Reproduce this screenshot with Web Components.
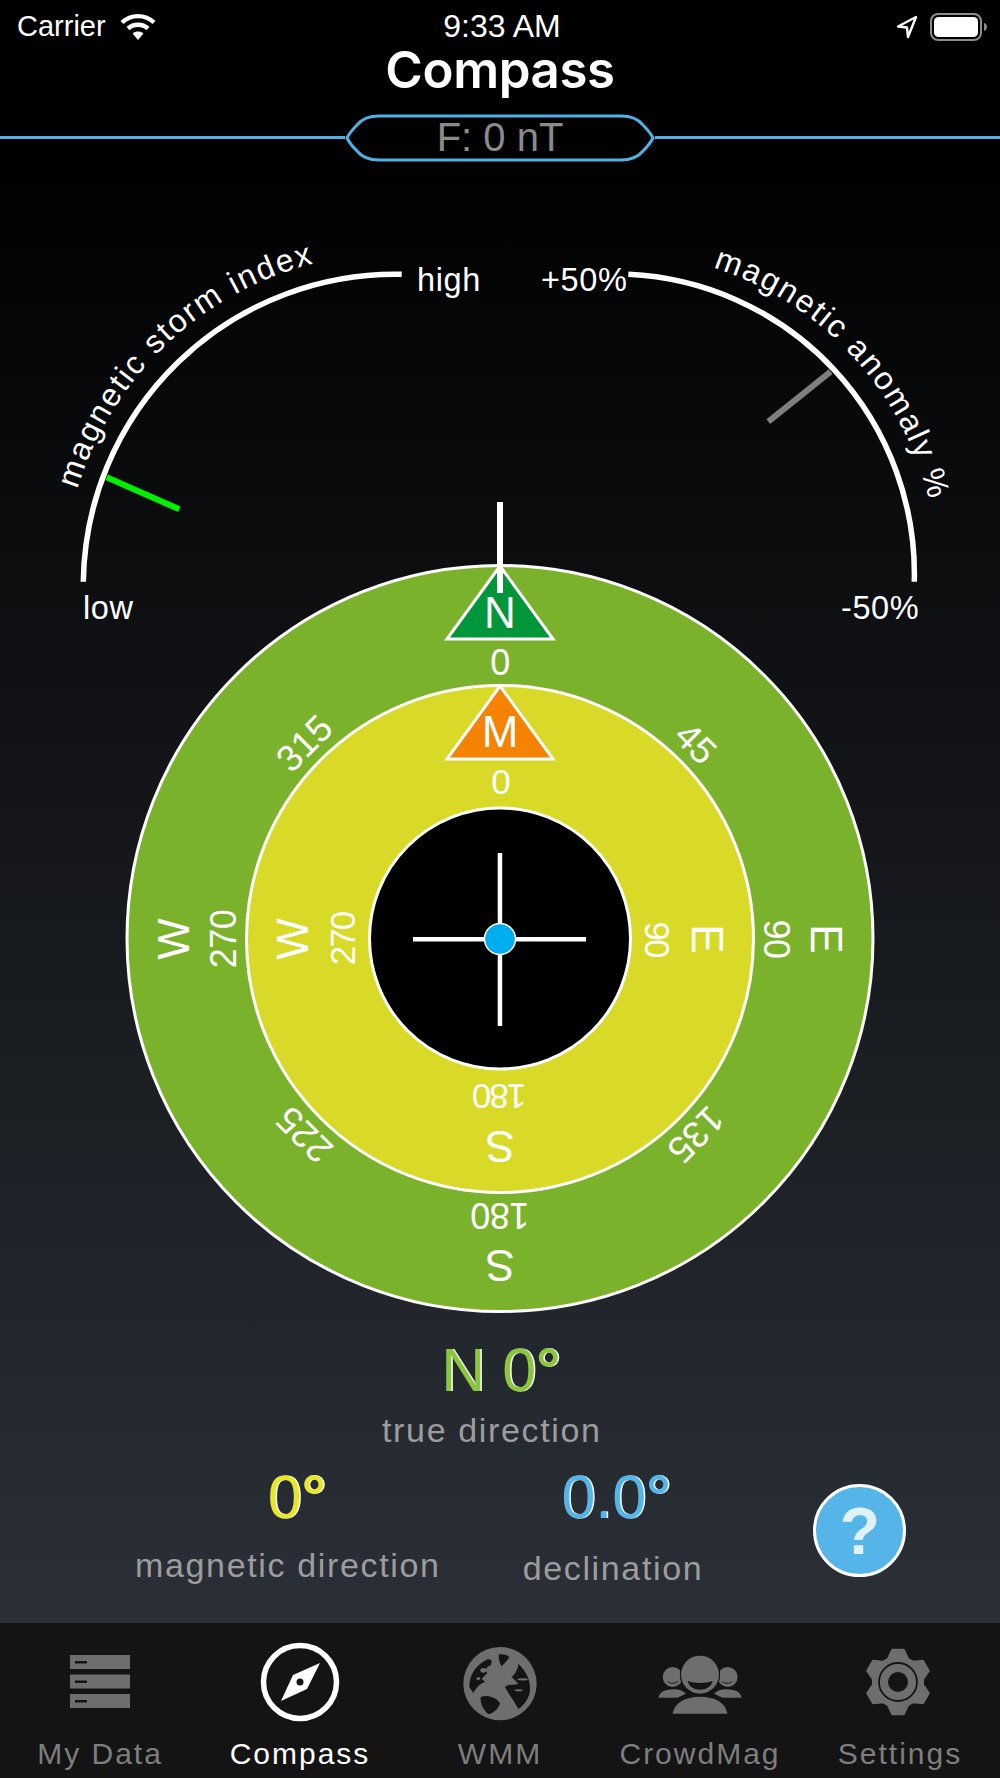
<!DOCTYPE html>
<html lang="en">
<head>
<meta charset="utf-8">
<title>Compass</title>
<style>
html,body{margin:0;padding:0}
body{width:1000px;height:1778px;overflow:hidden;background:linear-gradient(180deg,#000 8%,#2b3038 91.3%);font-family:"Liberation Sans",Arial,sans-serif;color:#fff}
</style>
</head>
<body>
<app-shell>
  <status-bar></status-bar>
  <app-title>Compass</app-title>
  <field-bar>F: 0 nT</field-bar>
  <compass-dial></compass-dial>
  <read-outs></read-outs>
  <tab-bar></tab-bar>
</app-shell>
<script>
function shadow(el,html){el.attachShadow({mode:'open'}).innerHTML=html;}

customElements.define('app-shell',class extends HTMLElement{
  connectedCallback(){shadow(this,`<style>:host{display:flex;flex-direction:column;width:1000px;height:1778px}</style><slot></slot>`);}
});

customElements.define('status-bar',class extends HTMLElement{
  connectedCallback(){shadow(this,`<style>
  :host{display:grid;grid-template-columns:1fr auto 1fr;align-items:center;height:46px;box-sizing:border-box;padding:7px 13px 0 17px;font-size:29px;color:#fff}
  .l{display:flex;align-items:center;gap:14px}
  .r{display:flex;align-items:center;justify-content:flex-end;gap:12px}
  svg{display:block}
  .t{font-size:32px}
  </style>
  <div class="l"><span>Carrier</span>
   <svg width="36" height="28" viewBox="0 0 36 28"><g fill="none" stroke="#fff" stroke-width="4.4"><path d="M2 9.5C11 1 25 1 34 9.5"/><path d="M8 15.5C13.5 10.5 22.5 10.5 28 15.5"/></g><path d="M12.6 20.4C15.5 17.8 20.500 17.800 23.400 20.400L18 27Z" fill="#fff"/></svg></div>
  <div class="t">9:33 AM</div>
  <div class="r">
   <svg width="22" height="24" viewBox="0 0 22 24"><path d="M20 2L2 11.500L11 12.500L12 22Z" fill="none" stroke="#fff" stroke-width="2.400" stroke-linejoin="round"/></svg>
   <svg width="57" height="28" viewBox="0 0 57 28"><rect x="1" y="1" width="50" height="26" rx="7" fill="none" stroke="#8c8c8c" stroke-width="2"/><rect x="4" y="4" width="44" height="20" rx="4.500" fill="#fff"/><path d="M54 10c2 .6 3 2.200 3 4s-1 3.400-3 4z" fill="#8c8c8c"/></svg>
  </div>`);}
});

customElements.define('app-title',class extends HTMLElement{
  connectedCallback(){shadow(this,`<style>:host{display:block;height:61px;text-align:center;font-size:51px;line-height:48px;font-weight:600;color:#fff;letter-spacing:-.4px;font-family:Inter,"Liberation Sans",sans-serif}</style><slot></slot>`);}
});

customElements.define('field-bar',class extends HTMLElement{
  connectedCallback(){shadow(this,`<style>
  :host{display:flex;align-items:center;height:63px;font-size:40px;color:#8b8b8b}
  .line{flex:1;height:3px;background:#4fb1e4;position:relative;top:-1px}
  .pill{position:relative;width:310px;height:50px;display:flex;align-items:center;justify-content:center;top:-1px}
  .pill svg{position:absolute;left:0;top:0}
  .pill span{position:relative}
  </style>
  <div class="line"></div>
  <div class="pill"><svg width="310" height="50" viewBox="0 0 310 50"><path d="M34 3H276C288 3 294 7 298 12C303 17 306 21 308 25C306 29 303 33 298 38C294 43 288 47 276 47H34C22 47 16 43 12 38C7 33 4 29 2 25C4 21 7 17 12 12C16 7 22 3 34 3Z" fill="none" stroke="#4fb1e4" stroke-width="3"/></svg><span><slot></slot></span></div>
  <div class="line"></div>`);}
});

customElements.define('compass-dial',class extends HTMLElement{
  connectedCallback(){
    const rot=(a,y,s,size,ls)=>`<text transform="rotate(${a} 500 939)" x="500" y="${y}" font-size="${size}" letter-spacing="${ls||0}" text-anchor="middle">${s}</text>`;
    const ring=(top,ly,dy,deg,ls)=>[[0,top,0],[90,'E',90],[180,'S',180],[270,'W',270]].map(([a,l,d])=>rot(a,ly,l,44)+rot(a,dy,d,deg,ls)).join('');
    shadow(this,`<style>:host{display:block;height:1150px}svg{display:block}text{fill:#fff;font-family:"Liberation Sans",Arial,sans-serif}</style>
    <svg width="1000" height="1150" viewBox="0 170 1000 1150">
      <path id="la" d="M77.300 489.200A333 333 0 0 1 395.300 253" fill="none"/>
      <path id="ra" d="M713 267.500A323 323 0 0 1 937.900 573.700" fill="none"/>
      <path d="M83.300 581.700A312 312 0 0 1 401.700 274.300" fill="none" stroke="#fff" stroke-width="5.500"/>
      <path d="M628.300 274.300A300 300 0 0 1 914.300 581.700" fill="none" stroke="#fff" stroke-width="5.500"/>
      <line x1="106.700" y1="477.300" x2="179.300" y2="509.300" stroke="#00f000" stroke-width="6"/>
      <line x1="830.700" y1="371.700" x2="768.300" y2="421.700" stroke="#7f7f7f" stroke-width="6"/>
      <text font-size="32" letter-spacing="1.950"><textPath href="#la">magnetic storm index</textPath></text>
      <text font-size="32" letter-spacing="2"><textPath href="#ra">magnetic anomaly %</textPath></text>
      <text x="83" y="619" font-size="32.500" letter-spacing=".6">low</text>
      <text x="417" y="291" font-size="32.500" letter-spacing=".6">high</text>
      <text x="541" y="291" font-size="32.500" letter-spacing=".6">+50%</text>
      <text x="841" y="619" font-size="32.500" letter-spacing=".6">-50%</text>

      <circle cx="500" cy="938.500" r="373" fill="#7ab32b" stroke="#fff" stroke-width="3"/>
      <circle cx="500" cy="939" r="253.500" fill="#d9da27" stroke="#fff" stroke-width="3"/>
      <circle cx="500" cy="938.500" r="130.500" fill="#000" stroke="#fff" stroke-width="3"/>

      <polygon points="500,566 447,639 553,639" fill="#009639" stroke="#fff" stroke-width="3"/>
      <polygon points="500,686 447,759 553,759" fill="#f58200" stroke="#fff" stroke-width="3"/>
      <rect x="497" y="502" width="6" height="91" fill="#fff"/>

      ${ring('N',628,675,36,-.5)}
      ${ring('M',747,794,35,-2)}
      ${[45,135,225,315].map(a=>rot(a,675,a,37)).join('')}

      <rect x="413" y="937" width="173" height="4.500" fill="#fff"/>
      <rect x="497.700" y="853" width="4.500" height="173" fill="#fff"/>
      <circle cx="500" cy="939" r="15.500" fill="#00aeef" stroke="#fff" stroke-width="1.500"/>
    </svg>`);
  }
});

customElements.define('read-out',class extends HTMLElement{
  connectedCallback(){
    const c=this.getAttribute('color'),v=this.getAttribute('value'),l=this.getAttribute('label');
    shadow(this,`<style>
    :host{display:flex;flex-direction:column;align-items:center}
    .v{font-size:61px;line-height:59px;height:59px;color:${c};text-shadow:1.500px 0 0 #fff;white-space:pre;padding-left:var(--vpad,0)}
    b{font-weight:700}
    .l{font-size:34px;line-height:40px;color:#9d9d9d;letter-spacing:1.650px;white-space:nowrap;margin-top:var(--lgap,28px)}
    </style><div class="v">${v}<b>°</b></div><div class="l">${l}</div>`);
  }
});

customElements.define('help-button',class extends HTMLElement{
  connectedCallback(){shadow(this,`<style>
  :host{display:flex;align-items:center;justify-content:center;width:93px;height:93px;box-sizing:border-box;border-radius:50%;background:#55b5e8;border:3px solid #fff}
  span{font-size:66px;line-height:66px;font-weight:700;color:#dff1fb;font-family:"Liberation Sans",sans-serif}
  </style><span>?</span>`);}
});

customElements.define('read-outs',class extends HTMLElement{
  connectedCallback(){shadow(this,`<style>
  :host{display:flex;flex-direction:column;height:303px;box-sizing:border-box;padding-top:21px}
  .top{align-self:flex-start;margin-left:382px;--vpad:18px;--lgap:10px}
  .row{display:flex;align-items:flex-start;margin-top:18px;padding-left:135px;--lgap:18px}
  .mag{--vpad:18px}
  .dec{margin-left:82px;--lgap:21px;--vpad:6px}
  .help{margin-left:110px;margin-top:16px}
  </style>
  <read-out class="top" value="N 0" label="true direction" color="#8cc63f"></read-out>
  <div class="row">
    <read-out class="mag" value="0" label="magnetic direction" color="#e6e62a"></read-out>
    <read-out class="dec" value="0.0" label="declination" color="#55b5e8"></read-out>
    <help-button class="help"></help-button>
  </div>`);}
});

customElements.define('tab-item',class extends HTMLElement{
  connectedCallback(){
    const active=this.hasAttribute('active');
    const icon=this.innerHTML;this.innerHTML='';
    shadow(this,`<style>
    :host{display:flex;flex-direction:column;align-items:center;padding-top:19px;color:${active?'#fff':'#7e7e7e'};font-size:30px;letter-spacing:2px}
    .i{height:80px;width:100px;display:flex;justify-content:center;align-items:center}
    svg{display:block}
    .t{margin-top:14px;line-height:36px;white-space:nowrap}
    </style><div class="i">${icon}</div><div class="t">${this.getAttribute('label')}</div>`);
  }
});

customElements.define('tab-bar',class extends HTMLElement{
  connectedCallback(){
    const g='#6e6e6e',bg='#141414';
    const pts=[];
    const cx=50,cy=50;
    for(let i=0;i<6;i++){
      const a=i*60-90;
      [[-23,25],[-10,32.5],[10,32.5],[23,25]].forEach(([d,r])=>{
        const t=(a+d)*Math.PI/180;pts.push((cx+r*Math.cos(t)).toFixed(2)+','+(cy+r*Math.sin(t)).toFixed(2));
      });
    }
    shadow(this,`<style>
    :host{display:grid;grid-template-columns:repeat(5,200px);height:155px;background:#141414}
    </style>
    <tab-item label="My Data"><svg width="60" height="54" viewBox="0 0 60 54"><g fill="${g}"><rect y="0" width="60" height="14"/><rect y="19.500" width="60" height="14"/><rect y="39" width="60" height="14"/></g><g fill="${bg}"><rect x="5" y="6" width="12" height="2.500"/><rect x="5" y="25.500" width="12" height="2.500"/><rect x="5" y="45" width="12" height="2.500"/></g></svg></tab-item>
    <tab-item label="Compass" active><svg width="80" height="80" viewBox="0 0 80 80"><circle cx="40" cy="40" r="36.500" fill="none" stroke="#fff" stroke-width="5.500"/><path d="M60 21L47 47L21 59L33 33Z" fill="#fff"/><circle cx="40" cy="40" r="3.500" fill="${bg}"/></svg></tab-item>
    <tab-item label="WMM"><svg width="100" height="90" viewBox="0 0 300 270"><circle cx="150" cy="140" r="110" fill="${g}"/><g fill="${bg}"><path d="M58 150C58 112 78 84 110 68C124 64 128 72 122 85C108 90 104 100 112 108L95 125L105 135C90 140 80 150 70 168Z"/><path d="M147 52C160 50 172 53 178 60C173 70 160 82 155 88C150 80 144 66 147 52Z"/><path d="M205 80C232 105 246 140 238 172C230 196 215 210 205 216C195 195 175 170 165 150C175 140 190 145 205 140L185 120C195 110 205 97 205 80Z"/><path d="M92 180C115 170 145 185 150 200C145 215 130 228 115 232C100 218 90 200 92 180Z"/></g><g fill="${g}"><ellipse cx="100" cy="100" rx="9" ry="7"/><ellipse cx="85" cy="125" rx="6" ry="4"/><ellipse cx="218" cy="127" rx="16" ry="3.500"/><ellipse cx="206" cy="160" rx="12" ry="3"/></g></svg></tab-item>
    <tab-item label="CrowdMag"><svg width="100" height="80" viewBox="27 0 300 240"><g fill="${g}"><circle cx="95" cy="105" r="30"/><circle cx="260" cy="105" r="30"/><path d="M52 167C56 150 70 142 100 142C115 142 125 146 135 155L110 167Z"/><path d="M302 167C298 150 284 142 254 142C239 142 229 146 219 155L244 167Z"/></g><path d="M78 117C88 124 102 124 112 117C108 128 84 128 78 117Z" fill="${bg}"/><path d="M242 117C252 124 266 124 276 117C270 128 246 128 242 117Z" fill="${bg}"/><circle cx="177" cy="98" r="57" fill="${g}" stroke="${bg}" stroke-width="7" paint-order="stroke"/><path d="M140 117C160 125 195 125 215 117C210 135 195 143 177 143C160 143 145 135 140 117Z" fill="${bg}"/><path d="M95 215C100 183 130 164 177 164C225 164 254 183 259 215Z" fill="${g}"/></svg></tab-item>
    <tab-item label="Settings"><svg width="76" height="76" viewBox="12 12 76 76" style="margin-left:-4px"><polygon points="${pts.join(' ')}" fill="${g}" stroke="${g}" stroke-width="2.500" stroke-linejoin="round"/><circle cx="50" cy="50" r="19" fill="none" stroke="${bg}" stroke-width="1.800"/><circle cx="50" cy="50" r="10" fill="${bg}"/></svg></tab-item>`);
  }
});
</script>
</body>
</html>
